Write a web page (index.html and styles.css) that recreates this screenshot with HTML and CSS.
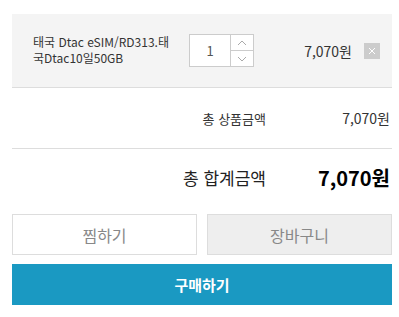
FILE: index.html
```html
<!DOCTYPE html>
<html lang="ko">
<head>
<meta charset="utf-8">
<link rel="stylesheet" href="styles.css">
</head>
<body>
<div class="wrap">
  <div class="item">
    <div class="name">태국 Dtac eSIM/RD313.태국Dtac10일50GB</div>
    <div class="qty">
      <div class="qty-val">1</div>
      <div class="qty-btns">
        <div class="qty-btn">
          <svg width="10" height="6" viewBox="0 0 10 6"><path d="M1 5 L5 1 L9 5" fill="none" stroke="#aaa" stroke-width="1"/></svg>
        </div>
        <div class="qty-btn">
          <svg width="10" height="6" viewBox="0 0 10 6"><path d="M1 1 L5 5 L9 1" fill="none" stroke="#aaa" stroke-width="1"/></svg>
        </div>
      </div>
    </div>
    <div class="price">7,070원</div>
    <div class="del">
      <svg width="8" height="8" viewBox="0 0 8 8"><path d="M1 1 L7 7 M7 1 L1 7" stroke="#fff" stroke-width="1"/></svg>
    </div>
  </div>
  <div class="row sub">
    <div class="label">총 상품금액</div>
    <div class="value">7,070원</div>
  </div>
  <div class="row total">
    <div class="label">총 합계금액</div>
    <div class="value">7,070원</div>
  </div>
  <div class="btns">
    <div class="btn wish">찜하기</div>
    <div class="btn cart">장바구니</div>
  </div>
  <div class="buy">구매하기</div>
</div>
</body>
</html>
```

FILE: styles.css
```css
* { box-sizing: border-box; }
body {
  margin: 0;
  background: #fff;
  font-family: "Noto Sans CJK KR", "Noto Sans", sans-serif;
  color: #333;
}
.wrap {
  width: 380px;
  margin: 14px 0 0 12px;
}
.item {
  display: flex;
  align-items: center;
  height: 74px;
  background: #f4f4f4;
  border-bottom: 1px solid #ddd;
  padding-left: 21px;
}
.name {
  width: 138px;
  font-size: 12px;
  line-height: 16px;
  color: #333;
  margin-right: 18px;
  margin-top: -1px;
  word-break: break-all;
}
.qty {
  display: flex;
  width: 65px;
  height: 33px;
  border: 1px solid #ccc;
  background: #fff;
}
.qty-val {
  width: 41px;
  border-right: 1px solid #ccc;
  display: flex;
  align-items: center;
  justify-content: center;
  font-size: 13px;
  color: #555;
}
.qty-btns {
  flex: 1;
  display: flex;
  flex-direction: column;
}
.qty-btn {
  flex: 1;
  display: flex;
  align-items: center;
  justify-content: center;
}
.qty-btn + .qty-btn { border-top: 1px solid #ccc; }
.price {
  width: 98px;
  text-align: right;
  font-size: 14px;
  color: #333;
}
.del {
  width: 16px;
  height: 16px;
  background: #ccc;
  margin-left: 12px;
  display: flex;
  align-items: center;
  justify-content: center;
}
.row {
  display: flex;
  justify-content: flex-end;
  align-items: center;
}
.row .value {
  width: 126px;
  text-align: right;
  padding-right: 2px;
}
.sub {
  height: 61px;
  border-bottom: 1px solid #ddd;
}
.sub .label { font-size: 13px; color: #333; }
.sub .value { font-size: 14px; color: #333; }
.total {
  height: 56px;
}
.total .label { font-size: 17px; color: #222; }
.total .value { font-size: 20px; font-weight: 700; color: #000; }
.btns {
  display: flex;
  gap: 10px;
  margin-top: 9px;
}
.btn {
  flex: 1;
  height: 41px;
  border: 1px solid #ddd;
  display: flex;
  align-items: center;
  justify-content: center;
  font-size: 16px;
  color: #888;
}
.wish { background: #fff; }
.cart { background: #eee; }
.buy {
  margin-top: 9px;
  height: 41px;
  background: #1a99c2;
  color: #fff;
  font-size: 15px;
  font-weight: 700;
  display: flex;
  align-items: center;
  justify-content: center;
}
```
